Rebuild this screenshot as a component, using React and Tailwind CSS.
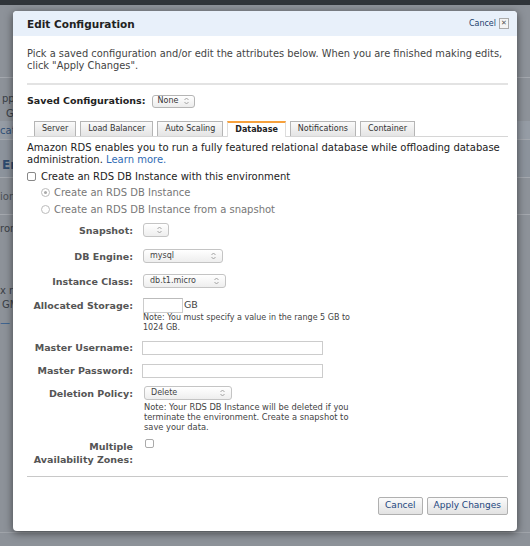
import React from "react";

function Arrows() {
  return (
    <svg width="5" height="8" viewBox="0 0 5 8" className="shrink-0">
      <path d="M0.5 3 L2.5 1 L4.5 3" fill="none" stroke="#999" strokeWidth="0.9" />
      <path d="M0.5 5 L2.5 7 L4.5 5" fill="none" stroke="#999" strokeWidth="0.9" />
    </svg>
  );
}

function Select({ w, text }) {
  return (
    <div
      className="flex items-center justify-between h-[14px] rounded-[3px] border border-[#c4c4c4] bg-gradient-to-b from-white to-[#eeeeee] pl-[6px] pr-[6px] text-[8px] text-[#444]"
      style={{ width: w }}
    >
      <span>{text}</span>
      <Arrows />
    </div>
  );
}

function Tab({ children, active }) {
  if (active) {
    return (
      <div className="h-[16px] px-[7px] flex items-center bg-white border-t-2 border-t-[#f7a13c] border-x border-x-[#ddd] text-[8px] font-bold text-[#222] -mb-px">
        {children}
      </div>
    );
  }
  return (
    <div className="h-[15px] px-[7px] flex items-center bg-gradient-to-b from-[#fafafa] to-[#e4e4e4] border border-[#b5b5b5] border-b-0 text-[8px] text-[#333]">
      {children}
    </div>
  );
}

function Label({ children, className = "" }) {
  return (
    <div className={"w-[106px] shrink-0 text-right text-[9.5px] font-bold text-[#555] leading-[13px] " + className}>
      {children}
    </div>
  );
}

export default function App() {
  return (
    <div className="relative w-[530px] h-[546px] overflow-hidden bg-[#8d9299] font-['DejaVu_Sans',sans-serif]">
      {/* background page */}
      <div className="h-[5px] bg-[#30353a]" />
      <div className="flex flex-col text-[10px] text-[#3a3f46]">
        <div className="h-[72px]" />
        <div className="h-px bg-[#a4a8ae]" />
        <div className="h-[13px]" />
        <div className="h-[14px] flex items-center pl-[2px]">ppl</div>
        <div className="h-[16px] flex items-center pl-[6px]">GM</div>
        <div className="h-[18px] flex items-center bg-[#959ca5] text-[#2f4f78]">cat</div>
        <div className="h-px bg-[#a4a8ae]" />
        <div className="h-[13px] bg-[#8c939c]" />
        <div className="h-[24px] flex items-center pl-[2px] text-[12px] font-bold text-[#2d4a6e] bg-[#8c939c]">En</div>
        <div className="h-px bg-[#a4a8ae]" />
        <div className="h-[36px] flex items-center text-[#4a4f56]">ion</div>
        <div className="h-px bg-[#a4a8ae]" />
        <div className="h-[6px]" />
        <div className="h-[14px] flex items-center">ron</div>
        <div className="h-[48px]" />
        <div className="h-[14px] flex items-center">x ru</div>
        <div className="h-[14px] flex items-center pl-[2px]">GM</div>
        <div className="h-[4px]" />
        <div className="h-[14px] flex items-center text-[#2f5b8f]">—</div>
      </div>
      <div className="absolute left-0 right-0 top-[532px] h-px bg-[#a0a4aa]" />

      {/* dialog */}
      <div className="absolute left-[13px] top-[11px] w-[504px] h-[520px] bg-white rounded-[4px] shadow-[0_2px_8px_rgba(0,0,0,0.55)] flex flex-col overflow-hidden">
        {/* header */}
        <div className="h-[25px] shrink-0 bg-[#e8f0fa] flex items-center justify-between pl-[14px] pr-[8px]">
          <div className="text-[10.5px] font-bold text-[#222] pt-[2px]">Edit Configuration</div>
          <div className="flex items-center gap-[3px]">
            <span className="text-[8px] text-[#23406e]">Cancel</span>
            <span className="w-[10px] h-[11px] border border-[#aaa] bg-[#f4f4f4] flex items-center justify-center text-[7px] leading-none text-[#555]">✕</span>
          </div>
        </div>

        <div className="pl-[14px] pr-[9px] flex flex-col">
          <p className="mt-[12px] text-[9.85px] leading-[12px] text-[#444]">
            Pick a saved configuration and/or edit the attributes below. When you are finished making edits, click "Apply Changes".
          </p>
          <div className="mt-[11px] h-[2px] bg-[#e3e3e3]" />

          <div className="mt-[9px] flex items-center h-[14px]">
            <span className="text-[9.5px] font-bold text-[#222]">Saved Configurations:</span>
            <div className="ml-[6px] w-[43px] h-[13px] rounded-[3px] border border-[#b5b5b5] bg-gradient-to-b from-white to-[#ececec] flex items-center justify-between px-[5px] text-[8px] text-[#333]">
              <span>None</span>
              <Arrows />
            </div>
          </div>

          {/* tabs */}
          <div className="mt-[13px] flex items-end gap-[4px] pl-[7px] border-b border-[#d6d6d6]">
            <Tab>Server</Tab>
            <Tab>Load Balancer</Tab>
            <Tab>Auto Scaling</Tab>
            <Tab active>Database</Tab>
            <Tab>Notifications</Tab>
            <Tab>Container</Tab>
          </div>

          <p className="mt-[5px] text-[10px] leading-[12px] text-[#222]">
            Amazon RDS enables you to run a fully featured relational database while offloading database administration.{" "}
            <span className="text-[#2f6cb5]">Learn more.</span>
          </p>

          <div className="mt-[4px] flex items-center h-[12px] text-[10px] text-[#222]">
            <span className="w-[9px] h-[9px] rounded-[2px] border border-[#888] bg-white mr-[5px]" />
            Create an RDS DB Instance with this environment
          </div>
          <div className="mt-[4px] flex items-center h-[12px] text-[10px] text-[#777] pl-[14px]">
            <span className="w-[9px] h-[9px] rounded-full border border-[#bbb] bg-white mr-[4px] flex items-center justify-center">
              <span className="w-[3px] h-[3px] rounded-full bg-[#aaa]" />
            </span>
            Create an RDS DB Instance
          </div>
          <div className="mt-[5px] flex items-center h-[12px] text-[10px] text-[#777] pl-[14px]">
            <span className="w-[9px] h-[9px] rounded-full border border-[#bbb] bg-white mr-[4px]" />
            Create an RDS DB Instance from a snapshot
          </div>

          {/* form */}
          <div className="mt-[8px] flex items-center gap-[10px] h-[14px]">
            <Label>Snapshot:</Label>
            <Select w="26px" text="" />
          </div>
          <div className="mt-[12px] flex items-center gap-[10px] h-[14px]">
            <Label>DB Engine:</Label>
            <Select w="80px" text="mysql" />
          </div>
          <div className="mt-[11px] flex items-center gap-[10px] h-[14px]">
            <Label>Instance Class:</Label>
            <Select w="83px" text="db.t1.micro" />
          </div>
          <div className="mt-[10px] flex items-start gap-[10px]">
            <Label className="pt-[1px]">Allocated Storage:</Label>
            <div className="flex flex-col">
              <div className="flex items-center">
                <div className="w-[40px] h-[15px] border border-[#ccc] border-t-[#bbb]" />
                <span className="text-[9.5px] text-[#444] ml-[1px]">GB</span>
              </div>
              <div className="text-[8px] leading-[10px] text-[#444] w-[220px]">
                Note: You must specify a value in the range 5 GB to 1024 GB.
              </div>
            </div>
          </div>
          <div className="mt-[7px] flex items-center gap-[9px] h-[15px]">
            <Label>Master Username:</Label>
            <div className="w-[181px] h-[14px] border border-[#ccc]" />
          </div>
          <div className="mt-[8px] flex items-center gap-[9px] h-[15px]">
            <Label>Master Password:</Label>
            <div className="w-[181px] h-[14px] border border-[#ccc]" />
          </div>
          <div className="mt-[8px] flex items-start gap-[11px]">
            <Label className="pt-[1px]">Deletion Policy:</Label>
            <div className="flex flex-col">
              <Select w="88px" text="Delete" />
              <div className="mt-[2px] text-[8.3px] leading-[10px] text-[#444] w-[220px]">
                Note: Your RDS DB Instance will be deleted if you terminate the environment. Create a snapshot to save your data.
              </div>
            </div>
          </div>
          <div className="mt-[7px] flex items-start gap-[12px]">
            <Label className="pt-[1px]">Multiple Availability Zones:</Label>
            <span className="w-[9px] h-[9px] rounded-[2px] border border-[#aaa] bg-white" />
          </div>

          <div className="mt-[10px] h-px bg-[#c8c8c8]" />

          <div className="mt-[20px] flex justify-end gap-[4px]">
            <div className="h-[18px] px-[6px] flex items-center border border-[#b0b0b0] rounded-[2px] bg-gradient-to-b from-[#fbfbfb] to-[#e2e2e2] text-[9px] text-[#23477e]">
              Cancel
            </div>
            <div className="h-[18px] px-[6px] flex items-center border border-[#b0b0b0] rounded-[2px] bg-gradient-to-b from-[#fbfbfb] to-[#e2e2e2] text-[9px] text-[#23477e]">
              Apply Changes
            </div>
          </div>
        </div>
      </div>
    </div>
  );
}
